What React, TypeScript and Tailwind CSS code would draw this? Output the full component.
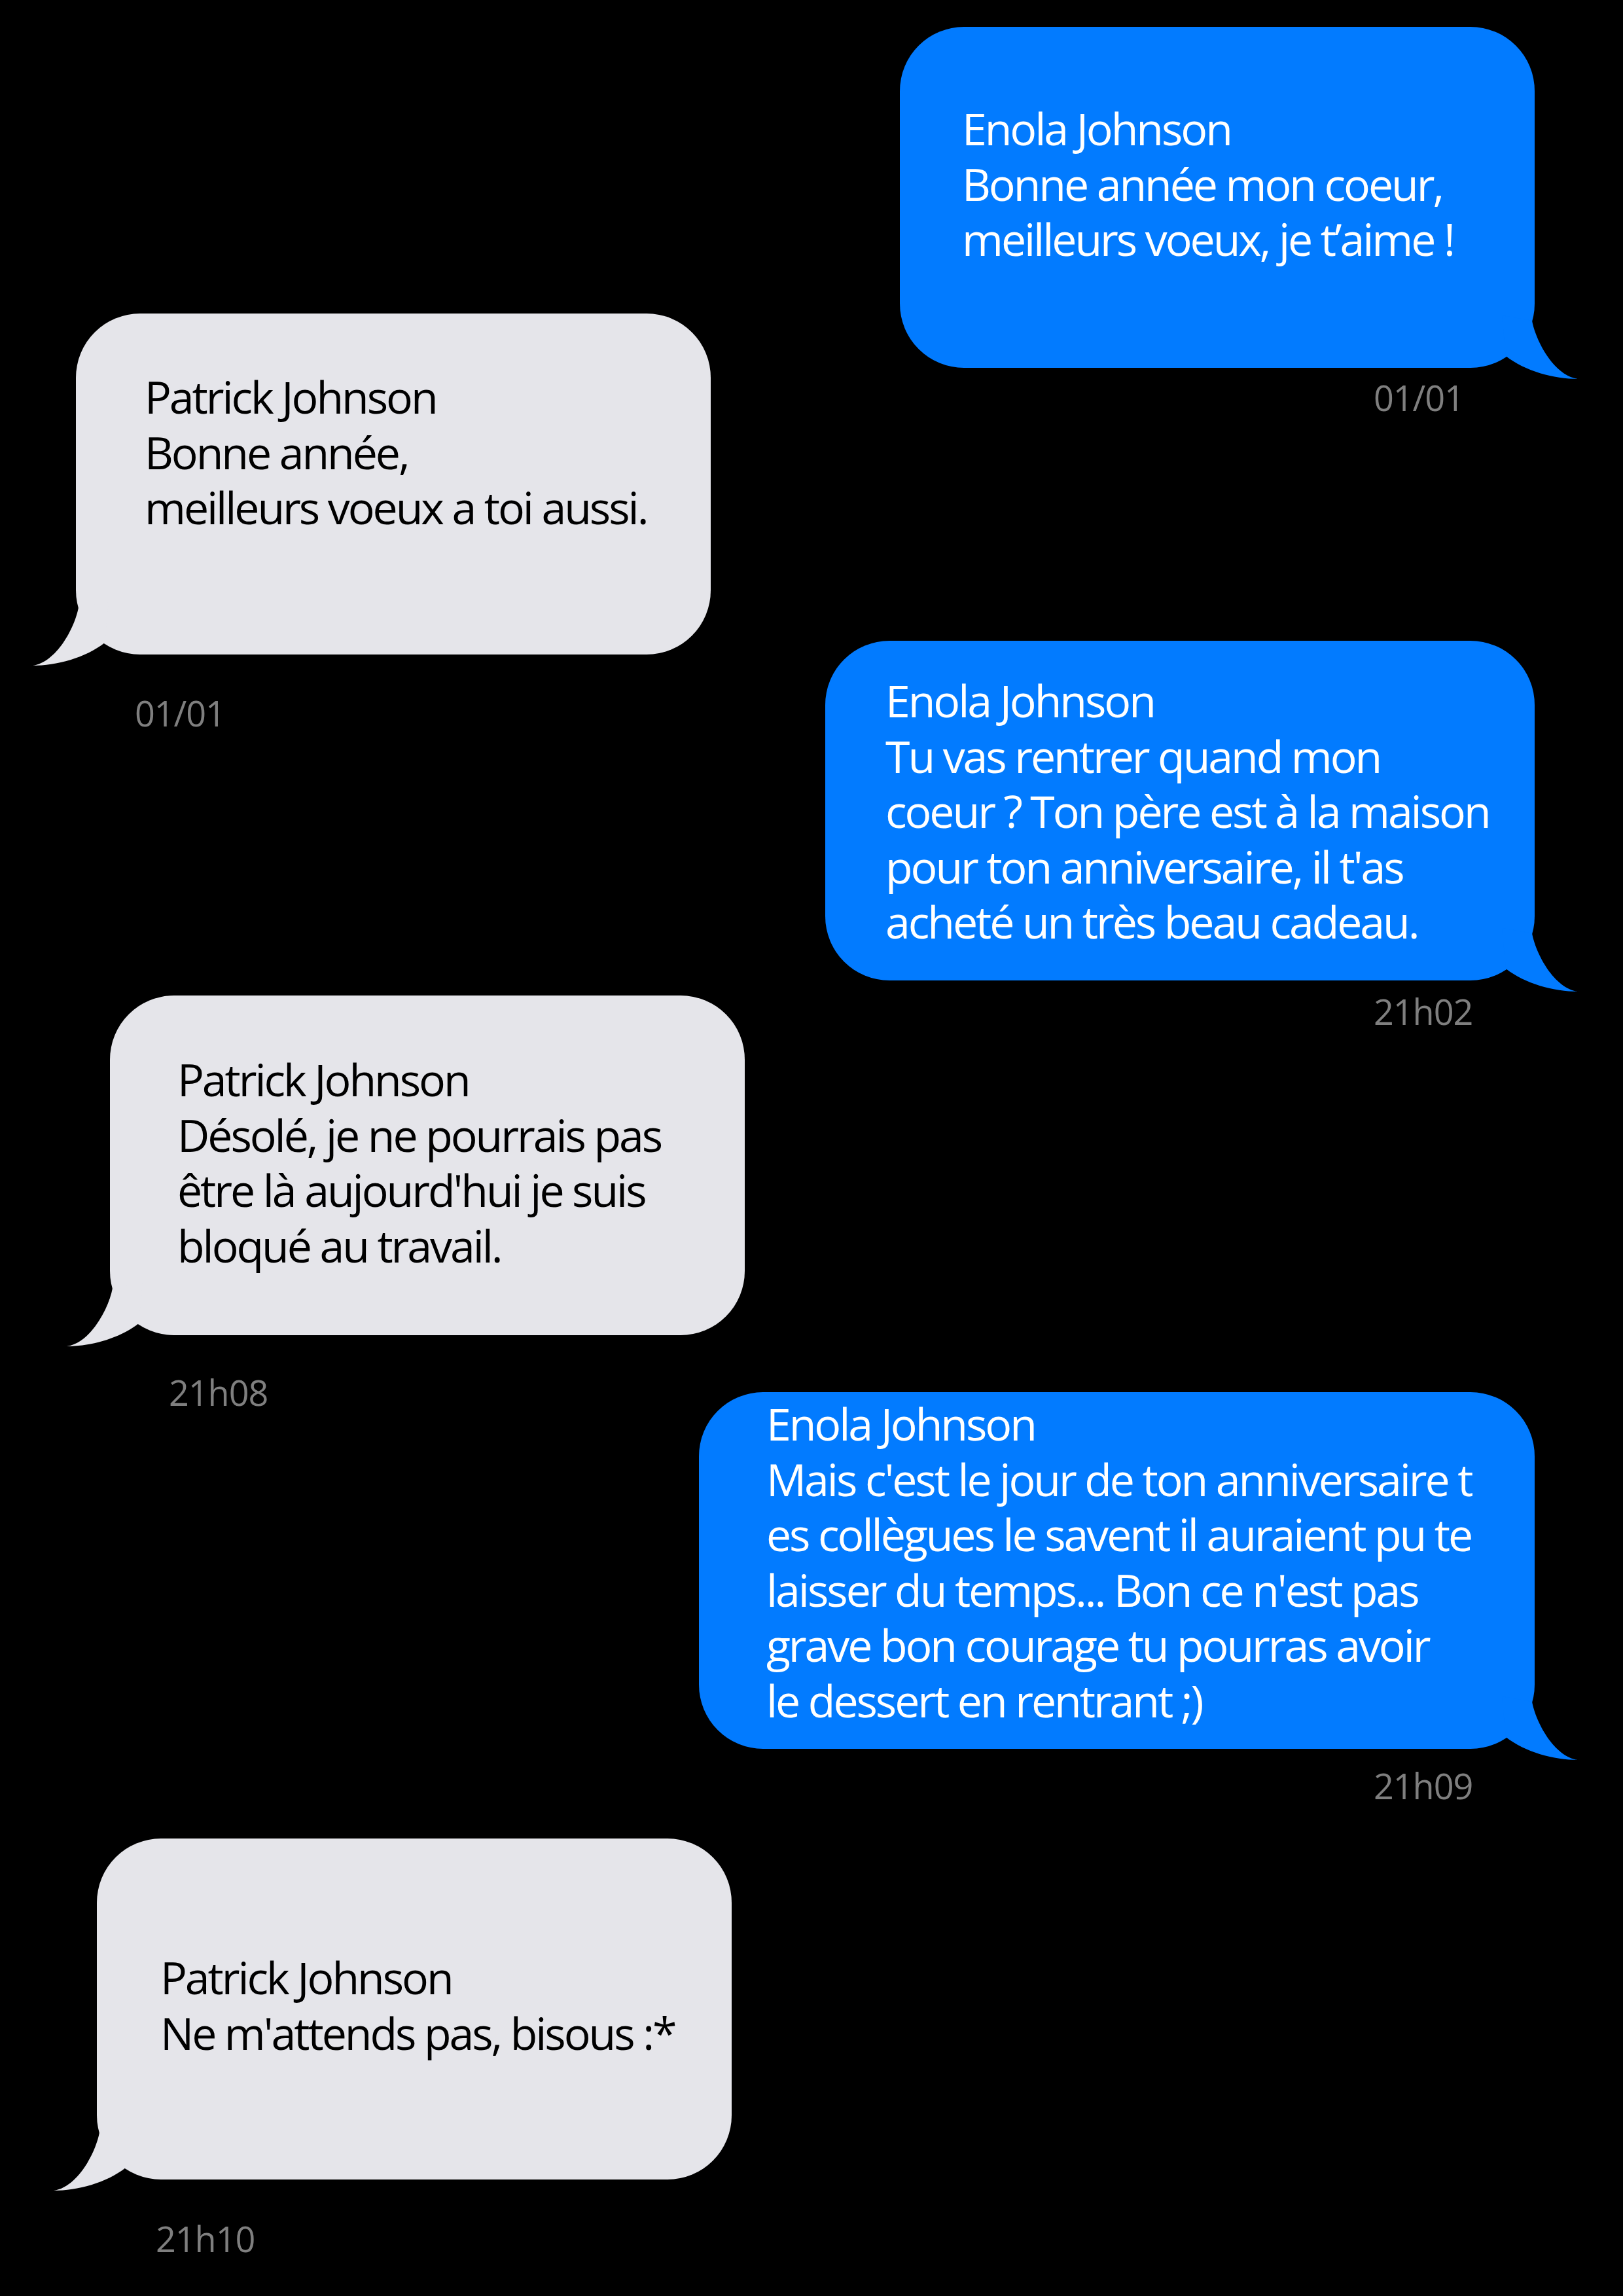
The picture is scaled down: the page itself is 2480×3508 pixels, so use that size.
import React from 'react';

type Side = 'left' | 'right';

interface Message {
  side: Side;
  rowClass: string;
  bubbleClass: string;
  timeClass: string;
  time: string;
  lines: string[];
}

const messages: Message[] = [
  {
    side: 'right',
    rowClass: 'pr-[135px]',
    bubbleClass: 'h-[521px] w-[970px] pt-[113px] pl-[95px]',
    timeClass: 'mt-[18px]',
    time: '01/01',
    lines: ['Enola Johnson', 'Bonne année mon coeur,', 'meilleurs voeux, je t’aime !'],
  },
  {
    side: 'left',
    rowClass: '-mt-[155px] pl-[116px]',
    bubbleClass: 'h-[521px] w-[970px] pt-[85px] pl-[105px]',
    timeClass: 'mt-[62px]',
    time: '01/01',
    lines: ['Patrick Johnson', 'Bonne année,', 'meilleurs voeux a toi aussi.'],
  },
  {
    side: 'right',
    rowClass: '-mt-[137px] pr-[135px]',
    bubbleClass: 'h-[519px] w-[1084px] pt-[49px] pl-[92px]',
    timeClass: 'mt-[20px]',
    time: '21h02',
    lines: [
      'Enola Johnson',
      'Tu vas rentrer quand mon',
      'coeur ? Ton père est à la maison',
      "pour ton anniversaire, il t'as",
      'acheté un très beau cadeau.',
    ],
  },
  {
    side: 'left',
    rowClass: '-mt-[51px] pl-[168px]',
    bubbleClass: 'h-[519px] w-[970px] pt-[86px] pl-[103px]',
    timeClass: 'mt-[60px]',
    time: '21h08',
    lines: [
      'Patrick Johnson',
      'Désolé, je ne pourrais pas',
      "être là aujourd'hui je suis",
      'bloqué au travail.',
    ],
  },
  {
    side: 'right',
    rowClass: '-mt-[27px] pr-[135px]',
    bubbleClass: 'h-[545px] w-[1277px] pt-[6px] pl-[103px]',
    timeClass: 'mt-[29px]',
    time: '21h09',
    lines: [
      'Enola Johnson',
      "Mais c'est le jour de ton anniversaire t",
      'es collègues le savent il auraient pu te',
      "laisser du temps... Bon ce n'est pas",
      'grave bon courage tu pourras avoir',
      'le dessert en rentrant ;)',
    ],
  },
  {
    side: 'left',
    rowClass: 'mt-[54px] pl-[148px]',
    bubbleClass: 'h-[521px] w-[970px] pt-[170px] pl-[97px]',
    timeClass: 'mt-[63px]',
    time: '21h10',
    lines: ['Patrick Johnson', "Ne m'attends pas, bisous :*"],
  },
];

// bubble tail, drawn for the right side and mirrored for the left one
const Tail = function ({ side }: { side: Side }) {
  const place =
    side === 'right'
      ? 'absolute -right-[70px] -bottom-[20px] fill-[#027bff]'
      : 'absolute -left-[70px] -bottom-[20px] -scale-x-100 fill-[#e5e5ea]';
  return (
    <svg viewBox="-60 -90 130 110" className={`${place} h-[110px] w-[130px]`}>
      <path d="M -4 -72 C 2 -40 30 12 66 17 C 30 17 -15 5 -44 -18 L -50 -80 Z" />
    </svg>
  );
};

const Bubble = function ({ message }: { message: Message }) {
  const isMe = message.side === 'right';
  return (
    <div
      className={`flex flex-col ${isMe ? 'items-end' : 'items-start'} ${message.rowClass}`}
    >
      <div
        className={`relative rounded-[98px] ${
          isMe ? 'bg-[#027bff] text-white' : 'bg-[#e5e5ea] text-black'
        } ${message.bubbleClass}`}
      >
        {message.lines.map((line) => (
          <p
            key={line}
            className="whitespace-nowrap text-[68px] leading-[84.5px] tracking-[-0.045em]"
          >
            {line}
          </p>
        ))}
        <Tail side={message.side} />
      </div>
      <p
        className={`h-[54px] text-[54px] leading-[54px] tracking-[-0.02em] text-[#7f7f7f] ${
          isMe ? 'w-[246px]' : 'ml-[90px]'
        } ${message.timeClass}`}
      >
        {message.time}
      </p>
    </div>
  );
};

export default function App() {
  return (
    <div className="flex min-h-[3508px] w-full flex-col bg-black pt-[41px] font-['Open_Sans',sans-serif]">
      {messages.map((message) => (
        <Bubble key={message.time + message.lines[1]} message={message} />
      ))}
    </div>
  );
}
